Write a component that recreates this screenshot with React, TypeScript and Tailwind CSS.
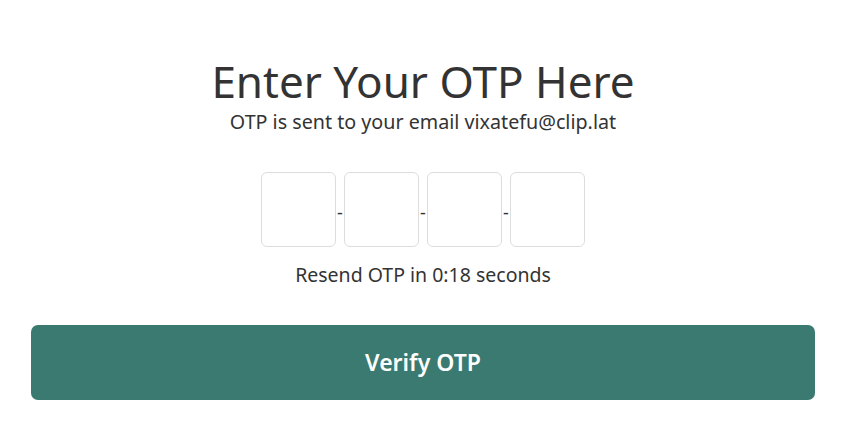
import React, { useState } from 'react';

const App: React.FC = () => {
  const [otp, setOtp] = useState<string[]>(['', '', '', '']);

  const handleChange = (i: number, v: string) => {
    setOtp((prev) => prev.map((d, idx) => (idx === i ? v.slice(-1) : d)));
  };

  return (
    <div className="min-h-screen w-full bg-white text-[#333333]" style={{ fontFamily: '"Noto Sans", sans-serif' }}>
      <div className="ml-[31px] w-[784px] flex flex-col items-center pt-[58px]">
        <h1 className="text-[44px] leading-[46px] font-normal">Enter Your OTP Here</h1>
        <p className="text-[19.7px] leading-[26px] mt-[5px]">OTP is sent to your email vixatefu@clip.lat</p>

        <div className="flex items-center mt-[37px]">
          {otp.map((d, i) => (
            <React.Fragment key={i}>
              {i > 0 && <span className="w-[8px] text-center text-[18px] leading-none mt-[4px]">-</span>}
              <input
                type="text"
                value={d}
                onChange={(e) => handleChange(i, e.target.value)}
                className="w-[75px] h-[75px] border border-[#dddddd] rounded-[6px] text-center text-2xl focus:outline-none"
              />
            </React.Fragment>
          ))}
        </div>

        <p className="text-[19.5px] leading-[26px] mt-[15px]">Resend OTP in 0:18 seconds</p>

        <button className="w-full h-[75px] mt-[37px] bg-[#3b7a70] text-white text-[23px] font-semibold rounded-[7px]">
          Verify OTP
        </button>
      </div>
    </div>
  );
};

export default App;
